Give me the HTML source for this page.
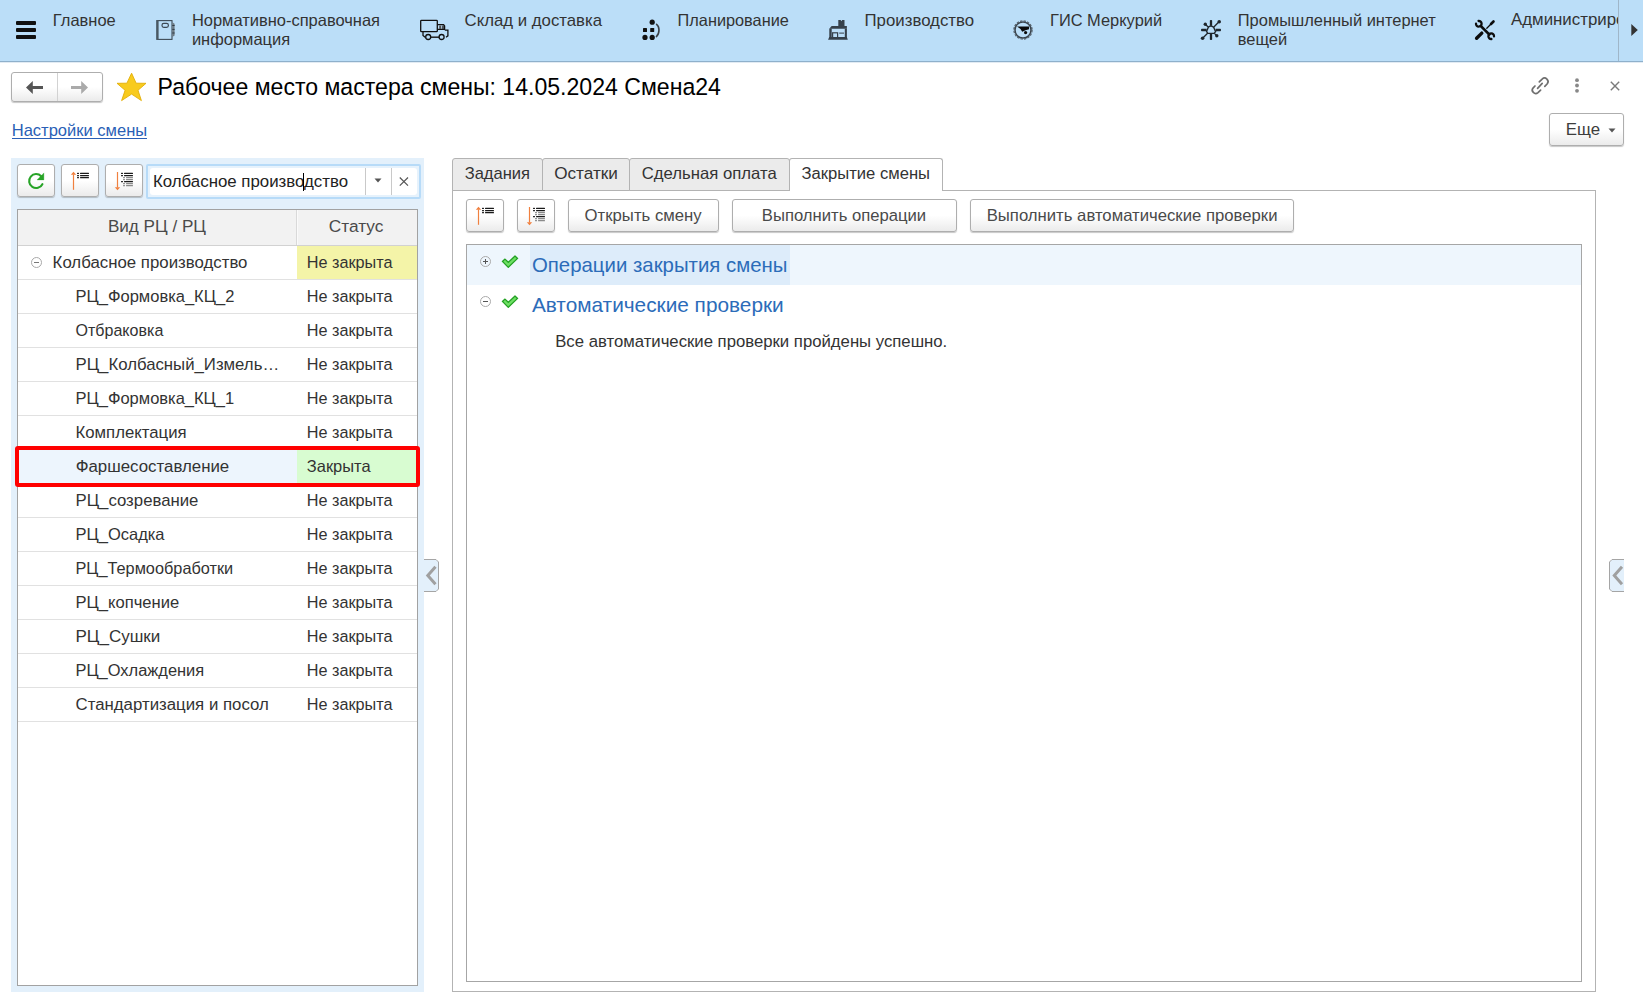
<!DOCTYPE html>
<html><head><meta charset="utf-8"><style>
html,body{margin:0;padding:0;width:1643px;height:1003px;overflow:hidden;background:#fff;position:relative}
.t{position:absolute;white-space:nowrap;line-height:30px;font-family:"Liberation Sans", sans-serif}
.b{position:absolute;box-sizing:border-box}
svg{position:absolute;overflow:visible}
.btn{position:absolute;box-sizing:border-box;border:1px solid #aeaeae;border-radius:3px;background:linear-gradient(#ffffff 0%,#ffffff 50%,#ebebeb 100%);box-shadow:0 1px 1px rgba(0,0,0,0.22)}
</style></head><body>
<div class="b" style="left:0px;top:0px;width:1643px;height:61px;background:#bbdef8"></div>
<div class="b" style="left:0px;top:61px;width:1643px;height:1px;background:#8fb0cb"></div>
<div class="b" style="left:0px;top:62px;width:1643px;height:1px;background:#e2ebf3"></div>
<div class="b" style="left:16px;top:21px;width:20px;height:4px;background:#111;border-radius:1px"></div>
<div class="b" style="left:16px;top:28px;width:20px;height:4px;background:#111;border-radius:1px"></div>
<div class="b" style="left:16px;top:35px;width:20px;height:4px;background:#111;border-radius:1px"></div>
<div class="t" style="left:52.80px;top:5.00px;font-size:16.481px;color:#333333;">Главное</div>
<div class="t" style="left:191.90px;top:5.00px;font-size:16.477px;color:#333333;">Нормативно-справочная</div>
<div class="t" style="left:464.60px;top:6.00px;font-size:16.775px;color:#333333;">Склад и доставка</div>
<div class="t" style="left:677.60px;top:5.00px;font-size:16.312px;color:#333333;">Планирование</div>
<div class="t" style="left:864.50px;top:6.00px;font-size:16.823px;color:#333333;">Производство</div>
<div class="t" style="left:1050.00px;top:5.00px;font-size:16.434px;color:#333333;">ГИС Меркурий</div>
<div class="t" style="left:1237.80px;top:5.00px;font-size:16.450px;color:#333333;">Промышленный интернет</div>
<div class="t" style="left:191.90px;top:24.00px;font-size:16.477px;color:#333333;">информация</div>
<div class="t" style="left:1237.80px;top:24.00px;font-size:16.450px;color:#333333;">вещей</div>
<div style="position:absolute;left:1500px;top:0;width:118px;height:61px;overflow:hidden"><div class="t" style="left:11.00px;top:5.00px;font-size:16.85px;color:#333">Администрирование</div></div>
<div class="b" style="left:1618px;top:0px;width:1px;height:61px;background:#9fb6c9"></div>
<svg style="left:1631px;top:24px" width="8" height="12"><path d="M0.3 0 L6.8 6 L0.3 12 Z" fill="#333"/></svg>
<svg style="left:150px;top:15px" width="30" height="30" viewBox="0 0 30 30"><rect x="7" y="5.6" width="15" height="18.8" fill="none" stroke="#3d4a55" stroke-width="1.1"/><rect x="6.4" y="5.1" width="2.2" height="19.7" fill="#4a5863"/><path d="M22.3 7.3 L24.6 8.8 V20.5 L22.3 22 Z" fill="#6d7a84"/><path d="M22.3 10.5h2.3M22.3 14.4h2.3M22.3 18h2.3" stroke="#2f3a44" stroke-width="1"/><rect x="12" y="8.4" width="6.4" height="4" rx="1.8" fill="none" stroke="#3d4a55" stroke-width="1.2"/></svg>
<svg style="left:415px;top:14px" width="40" height="30" viewBox="0 0 40 30"><rect x="5.7" y="6.3" width="16.6" height="11.4" rx="0.8" fill="none" stroke="#111" stroke-width="1.3"/><path d="M22.3 10.6 H28.6 L29.6 12 V15.4 H22.3" fill="none" stroke="#111" stroke-width="1.3"/><rect x="24.2" y="11.5" width="2" height="3.5" fill="#555"/><rect x="27.2" y="11.5" width="1.6" height="3.5" fill="#333"/><path d="M29.8 16.2 H32.9 V21.8 L31 23.2" fill="none" stroke="#111" stroke-width="1.3"/><path d="M8 17.7 V21.5 L10.5 23.5" fill="none" stroke="#111" stroke-width="1.3"/><path d="M15.8 23.2 H24.2" stroke="#222" stroke-width="1.5"/><circle cx="13.2" cy="23" r="2.5" fill="none" stroke="#111" stroke-width="1.3"/><circle cx="26.6" cy="23" r="2.5" fill="none" stroke="#111" stroke-width="1.3"/></svg>
<svg style="left:636px;top:15px" width="30" height="30" viewBox="0 0 30 30"><circle cx="16.2" cy="7.2" r="2.6" fill="#111"/><rect x="7" y="13" width="4" height="4" rx="0.6" fill="#111"/><rect x="14.2" y="13" width="4" height="4" rx="0.6" fill="#111"/><circle cx="9" cy="22.4" r="2.6" fill="#111"/><circle cx="16.2" cy="22.4" r="2.6" fill="#111"/><path d="M20.6 9.3 C23.6 11.5 24 18.5 20.4 21.6" fill="none" stroke="#3a3f44" stroke-width="1.6" stroke-linecap="round"/></svg>
<svg style="left:823px;top:15px" width="30" height="30" viewBox="0 0 30 30"><g fill="#36414b"><path d="M15.3 5.1 H17.6 L18.4 6.2 L19.2 5.1 H21.5 V12 H15.3 Z"/><path d="M6.3 13.8 L8.6 11.1 H23.9 V13.8 Z"/><rect x="6.3" y="13.6" width="2.4" height="10.4"/><rect x="21.8" y="13.6" width="2.1" height="10.4"/><path d="M5.1 24.8 L6.2 22.1 H23.8 L24.8 24.8 Z"/><rect x="16.2" y="17.6" width="4.8" height="1"/></g><rect x="9.6" y="17.8" width="5" height="5.6" fill="none" stroke="#36414b" stroke-width="1.2"/></svg>
<svg style="left:1008px;top:15px" width="30" height="30" viewBox="0 0 30 30"><circle cx="15" cy="15" r="9.1" fill="none" stroke="#55616b" stroke-width="1.2" stroke-dasharray="2.4 1.2"/><circle cx="15" cy="15" r="8" fill="none" stroke="#3a444d" stroke-width="1.5"/><path d="M9 11.4 H21 V14.3 L17.5 15.3 L14.2 16.8 L12.5 14 Z" fill="#0a0a0a"/><circle cx="17.6" cy="17.6" r="1.6" fill="#0a0a0a"/></svg>
<svg style="left:1196px;top:15px" width="30" height="30" viewBox="0 0 30 30"><g stroke="#1f262c" fill="none"><path d="M12.6 11.8 L15 10.8 L17.6 12.2 L19.6 16.6 L18 18.4 H11.6 L10.6 16.2 Z" stroke-width="1.4"/><path d="M15 5.5 V10.8 M15 18.4 V24.5 M5.5 15 H10.6 M19.6 15 H24.5" stroke-width="2.3"/><path d="M9.5 9.5 L12.2 12 M23 6.8 L17.6 12.2 M6.6 23.2 L11.6 18.2 M18.4 18.4 L20.6 20.6" stroke-width="1.3"/></g><g fill="#1f262c"><circle cx="9.3" cy="9.3" r="1.7"/><circle cx="23.2" cy="6.7" r="1.8"/><circle cx="6.6" cy="23.2" r="1.8"/><circle cx="20.8" cy="20.8" r="1.7"/><rect x="14" y="5.2" width="2" height="1.6"/><rect x="14" y="23.2" width="2" height="1.6"/><rect x="5.2" y="14" width="1.6" height="2"/><rect x="23.2" y="14" width="1.6" height="2"/></g></svg>
<svg style="left:1470px;top:15px" width="30" height="30" viewBox="0 0 30 30"><g fill="none" stroke="#0d0d0d" stroke-linecap="round"><path d="M10.8 11 L19.3 19.5" stroke-width="2.5"/><path d="M8.56 6.0 A2.8 2.8 0 1 1 6.0 8.56" stroke-width="2.3"/><path d="M21.4 24 A2.8 2.8 0 1 1 24 21.4" stroke-width="2.3"/><path d="M6.6 23.3 L11.8 18.1" stroke-width="3.4"/><path d="M16.8 13.2 L21.5 8.5" stroke-width="1.3"/><path d="M21 9 L23.5 6.5" stroke-width="2.6"/></g></svg>
<div class="btn" style="left:11px;top:72px;width:92px;height:30px"></div>
<div class="b" style="left:57px;top:73px;width:1px;height:28px;background:#d2d2d2"></div>
<svg style="left:25px;top:80px" width="19" height="15" viewBox="0 0 19 15"><path d="M1 7.5 L7.8 1 V6 H18 V9 H7.8 V14 Z" fill="#555"/></svg>
<svg style="left:70px;top:80px" width="19" height="15" viewBox="0 0 19 15"><path d="M18 7.5 L11.2 1 V6 H1 V9 H11.2 V14 Z" fill="#aaaaaa"/></svg>
<svg style="left:116px;top:72px" width="31" height="30" viewBox="0 0 31 30"><path d="M15.6 1.2 L20.1 11.2 L30 11.3 L22 18.3 L25.4 28.6 L15.6 22.1 L5.6 28.6 L9.1 18.3 L1 11.3 L10.9 11.2 Z" fill="#f8cb1e" stroke="#e2ae06" stroke-width="0.9" stroke-linejoin="round"/></svg>
<div class="t" style="left:157.60px;top:71.50px;font-size:23.095px;color:#000000;">Рабочее место мастера смены: 14.05.2024 Смена24</div>
<svg style="left:1525px;top:72px" width="30" height="28" viewBox="0 0 30 28"><g fill="none" stroke="#6f6f6f" stroke-width="1.7" stroke-linecap="round"><path d="M14.3 9.9 L17.13 7.03 A3.5 3.5 0 0 1 22.07 11.97 L19.8 14.3"/><path d="M10.0 14.0 L8.2 15.8 A3.4 3.4 0 0 0 13.0 20.6 L15.6 18.1"/><path d="M12.6 16.4 L17.2 11.4"/></g></svg>
<svg style="left:1573px;top:78px" width="8" height="15" viewBox="0 0 8 15"><circle cx="4" cy="2.2" r="1.9" fill="#888"/><circle cx="4" cy="7.5" r="1.9" fill="#888"/><circle cx="4" cy="12.8" r="1.9" fill="#888"/></svg>
<svg style="left:1609px;top:80px" width="12" height="12" viewBox="0 0 12 12"><path d="M1.8 1.8 L10.2 10.2 M10.2 1.8 L1.8 10.2" stroke="#7a7a7a" stroke-width="1.4"/></svg>
<div class="t" style="left:11.70px;top:116.00px;font-size:16.546px;color:#2a5fb6;">Настройки смены</div>
<div class="b" style="left:12px;top:138px;width:135px;height:1px;background:#2a5fb6"></div>
<div class="btn" style="left:1549px;top:113px;width:75px;height:33px"></div>
<div class="t" style="left:1565.80px;top:114.70px;font-size:16.878px;color:#3d3d3d;">Еще</div>
<svg style="left:1608px;top:128px" width="8" height="5" viewBox="0 0 8 5"><path d="M0.5 0.5 H7.5 L4 4.5 Z" fill="#555"/></svg>
<div class="b" style="left:11px;top:158px;width:413px;height:834px;background:#e3f0fb"></div>
<div class="btn" style="left:17px;top:164px;width:38px;height:33px"></div>
<div class="btn" style="left:61px;top:164px;width:38px;height:33px"></div>
<div class="btn" style="left:105px;top:164px;width:38px;height:33px"></div>
<svg style="left:22px;top:167px" width="28" height="28" viewBox="0 0 28 28"><path d="M19.2 9.2 A7 7 0 1 0 20.4 17.2" fill="none" stroke="#28a428" stroke-width="2.1" stroke-linecap="round"/><path d="M21.9 5.9 L21.9 12.9 L15 12.9 Z" fill="#28a428" stroke="#28a428" stroke-width="0.3" stroke-linejoin="round"/></svg>
<svg style="left:64px;top:166px" width="30" height="28" viewBox="0 0 30 28"><path d="M9.5 8.4 V23.8" stroke="#f0803f" stroke-width="1.2"/><path d="M9.5 5.8 L12.2 8.8 H6.8 Z" fill="#f0803f"/><rect x="13" y="6.800000000000001" width="2" height="1.3" rx="0.5" fill="#1a1a1a"/><rect x="16" y="6.800000000000001" width="9" height="1.3" rx="0.5" fill="#1a1a1a"/><rect x="13" y="8.9" width="2" height="1.3" rx="0.5" fill="#1a1a1a"/><rect x="16" y="8.9" width="9" height="1.3" rx="0.5" fill="#1a1a1a"/><rect x="13" y="10.9" width="2" height="1.3" rx="0.5" fill="#1a1a1a"/><rect x="16" y="10.9" width="9" height="1.3" rx="0.5" fill="#1a1a1a"/></svg>
<svg style="left:108px;top:166px" width="30" height="28" viewBox="0 0 30 28"><path d="M9.5 6 V21.5" stroke="#f0803f" stroke-width="1.2"/><path d="M9.5 24.2 L12.2 21.2 H6.8 Z" fill="#f0803f"/><rect x="13" y="6.800000000000001" width="2" height="1.3" rx="0.5" fill="#1a1a1a"/><rect x="16" y="6.800000000000001" width="9" height="1.3" rx="0.5" fill="#1a1a1a"/><rect x="13" y="8.9" width="2" height="1.3" rx="0.5" fill="#1a1a1a"/><rect x="16" y="8.9" width="9" height="1.3" rx="0.5" fill="#1a1a1a"/><rect x="15" y="10.9" width="2" height="1.3" rx="0.5" fill="#8a8a8a"/><rect x="18" y="10.9" width="7" height="1.3" rx="0.5" fill="#8a8a8a"/><rect x="15" y="12.9" width="2" height="1.3" rx="0.5" fill="#8a8a8a"/><rect x="18" y="12.9" width="7" height="1.3" rx="0.5" fill="#8a8a8a"/><rect x="13" y="14.9" width="2" height="1.3" rx="0.5" fill="#1a1a1a"/><rect x="16" y="14.9" width="9" height="1.3" rx="0.5" fill="#1a1a1a"/><rect x="15" y="16.9" width="2" height="1.3" rx="0.5" fill="#8a8a8a"/><rect x="18" y="16.9" width="7" height="1.3" rx="0.5" fill="#8a8a8a"/><rect x="15" y="18.9" width="2" height="1.3" rx="0.5" fill="#8a8a8a"/><rect x="18" y="18.9" width="7" height="1.3" rx="0.5" fill="#8a8a8a"/></svg>
<div class="b" style="left:146px;top:164px;width:275px;height:35px;border:2px solid #b7dbf8;border-radius:2px;background:#e6f2fc"></div>
<div class="b" style="left:150px;top:168px;width:267px;height:27px;background:#fff;border-radius:3px"></div>
<div class="t" style="left:153.00px;top:166.80px;font-size:16.843px;color:#222222;">Колбасное производство</div>
<div class="b" style="left:303px;top:173px;width:1px;height:18px;background:#000"></div>
<div class="b" style="left:365px;top:168px;width:1px;height:27px;background:#c9c9c9"></div>
<div class="b" style="left:391px;top:168px;width:1px;height:27px;background:#c9c9c9"></div>
<svg style="left:374px;top:178px" width="8" height="5" viewBox="0 0 8 5"><path d="M0.5 0.5 H7.5 L4 4.5 Z" fill="#555"/></svg>
<svg style="left:398px;top:176px" width="12" height="12" viewBox="0 0 12 12"><path d="M1.8 1.5 L10 9.7 M10 1.5 L1.8 9.7" stroke="#555" stroke-width="1.2"/></svg>
<div class="b" style="left:17px;top:209px;width:401px;height:777px;border:1px solid #a2a2a2;background:#fff"></div>
<div class="b" style="left:18px;top:210px;width:399px;height:35px;background:#f2f2f2"></div>
<div class="b" style="left:18px;top:245px;width:399px;height:1px;background:#d2d2d2"></div>
<div class="b" style="left:296px;top:210px;width:1px;height:35px;background:#d9d9d9"></div>
<div class="b" style="left:297px;top:210px;width:1px;height:35px;background:#fafafa"></div>
<div class="t" style="left:107.90px;top:211.80px;font-size:17.126px;color:#4a4a4a;">Вид РЦ / РЦ</div>
<div class="t" style="left:328.70px;top:210.80px;font-size:17.306px;color:#4a4a4a;">Статус</div>
<div class="b" style="left:297px;top:246px;width:120px;height:33px;background:#f4f4a8"></div>
<div class="b" style="left:18px;top:450px;width:399px;height:33px;background:#edf5fd"></div>
<div class="b" style="left:297px;top:450px;width:120px;height:33px;background:#d8fcd1"></div>
<div class="b" style="left:18px;top:279px;width:399px;height:1px;background:#e1e1e1"></div>
<div class="b" style="left:18px;top:313px;width:399px;height:1px;background:#e1e1e1"></div>
<div class="b" style="left:18px;top:347px;width:399px;height:1px;background:#e1e1e1"></div>
<div class="b" style="left:18px;top:381px;width:399px;height:1px;background:#e1e1e1"></div>
<div class="b" style="left:18px;top:415px;width:399px;height:1px;background:#e1e1e1"></div>
<div class="b" style="left:18px;top:449px;width:399px;height:1px;background:#e1e1e1"></div>
<div class="b" style="left:18px;top:483px;width:399px;height:1px;background:#e1e1e1"></div>
<div class="b" style="left:18px;top:517px;width:399px;height:1px;background:#e1e1e1"></div>
<div class="b" style="left:18px;top:551px;width:399px;height:1px;background:#e1e1e1"></div>
<div class="b" style="left:18px;top:585px;width:399px;height:1px;background:#e1e1e1"></div>
<div class="b" style="left:18px;top:619px;width:399px;height:1px;background:#e1e1e1"></div>
<div class="b" style="left:18px;top:653px;width:399px;height:1px;background:#e1e1e1"></div>
<div class="b" style="left:18px;top:687px;width:399px;height:1px;background:#e1e1e1"></div>
<div class="b" style="left:18px;top:721px;width:399px;height:1px;background:#e1e1e1"></div>
<svg style="left:30px;top:256px" width="13" height="13" viewBox="0 0 13 13"><circle cx="6.5" cy="6.5" r="5" fill="#fff" stroke="#a9a9a9" stroke-width="1"/><path d="M4 6.5 H9" stroke="#777" stroke-width="1"/></svg>
<div class="t" style="left:52.60px;top:248.00px;font-size:16.826px;color:#333333;">Колбасное производство</div>
<div class="t" style="left:75.50px;top:282.00px;font-size:16.537px;color:#333333;">РЦ_Формовка_КЦ_2</div>
<div class="t" style="left:75.50px;top:315.00px;font-size:16.055px;color:#333333;">Отбраковка</div>
<div class="t" style="left:75.50px;top:350.00px;font-size:16.787px;color:#333333;">РЦ_Колбасный_Измель…</div>
<div class="t" style="left:75.50px;top:383.00px;font-size:16.516px;color:#333333;">РЦ_Формовка_КЦ_1</div>
<div class="t" style="left:75.50px;top:418.00px;font-size:16.769px;color:#333333;">Комплектация</div>
<div class="t" style="left:75.70px;top:452.00px;font-size:16.856px;color:#333333;">Фаршесоставление</div>
<div class="t" style="left:75.50px;top:486.00px;font-size:16.773px;color:#333333;">РЦ_созревание</div>
<div class="t" style="left:75.50px;top:519.00px;font-size:16.504px;color:#333333;">РЦ_Осадка</div>
<div class="t" style="left:75.50px;top:553.00px;font-size:16.314px;color:#333333;">РЦ_Термообработки</div>
<div class="t" style="left:75.50px;top:588.00px;font-size:16.582px;color:#333333;">РЦ_копчение</div>
<div class="t" style="left:75.50px;top:622.00px;font-size:17.026px;color:#333333;">РЦ_Сушки</div>
<div class="t" style="left:75.50px;top:655.00px;font-size:16.442px;color:#333333;">РЦ_Охлаждения</div>
<div class="t" style="left:75.50px;top:690.00px;font-size:16.826px;color:#333333;">Стандартизация и посол</div>
<div class="t" style="left:306.80px;top:247.00px;font-size:16.229px;color:#333333;">Не закрыта</div>
<div class="t" style="left:306.80px;top:281.00px;font-size:16.229px;color:#333333;">Не закрыта</div>
<div class="t" style="left:306.80px;top:315.00px;font-size:16.229px;color:#333333;">Не закрыта</div>
<div class="t" style="left:306.80px;top:349.00px;font-size:16.229px;color:#333333;">Не закрыта</div>
<div class="t" style="left:306.80px;top:383.00px;font-size:16.229px;color:#333333;">Не закрыта</div>
<div class="t" style="left:306.80px;top:417.00px;font-size:16.229px;color:#333333;">Не закрыта</div>
<div class="t" style="left:306.80px;top:451.00px;font-size:16.473px;color:#333333;">Закрыта</div>
<div class="t" style="left:306.80px;top:485.00px;font-size:16.229px;color:#333333;">Не закрыта</div>
<div class="t" style="left:306.80px;top:519.00px;font-size:16.229px;color:#333333;">Не закрыта</div>
<div class="t" style="left:306.80px;top:553.00px;font-size:16.229px;color:#333333;">Не закрыта</div>
<div class="t" style="left:306.80px;top:587.00px;font-size:16.229px;color:#333333;">Не закрыта</div>
<div class="t" style="left:306.80px;top:621.00px;font-size:16.229px;color:#333333;">Не закрыта</div>
<div class="t" style="left:306.80px;top:655.00px;font-size:16.229px;color:#333333;">Не закрыта</div>
<div class="t" style="left:306.80px;top:689.00px;font-size:16.229px;color:#333333;">Не закрыта</div>
<div class="b" style="left:15px;top:446px;width:405px;height:41px;border:4px solid #ff0000;border-radius:3px"></div>
<svg style="left:423px;top:558px" width="17" height="35" viewBox="0 0 17 35"><path d="M1 1.5 H13 L15.5 4 V31 L13 33.5 H1" fill="#e3f0fb" stroke="#a5a5a5" stroke-width="1"/><path d="M12.5 8.8 L4.8 17.5 L12.5 26.2" fill="none" stroke="#a0a0a0" stroke-width="3"/></svg>
<div class="b" style="left:452px;top:190px;width:1144px;height:802px;border:1px solid #b3b3b3;background:#fff"></div>
<div class="b" style="left:452px;top:158px;width:91px;height:33px;border:1px solid #b3b3b3;border-radius:3px 3px 0 0;background:#ebebeb"></div>
<div class="b" style="left:542px;top:158px;width:88px;height:33px;border:1px solid #b3b3b3;border-radius:3px 3px 0 0;background:#ebebeb"></div>
<div class="b" style="left:629px;top:158px;width:161px;height:33px;border:1px solid #b3b3b3;border-radius:3px 3px 0 0;background:#ebebeb"></div>
<div class="b" style="left:789px;top:158px;width:154px;height:33px;border:1px solid #b3b3b3;border-bottom:none;border-radius:3px 3px 0 0;background:#fff"></div>
<div class="t" style="left:464.70px;top:159.10px;font-size:16.552px;color:#333333;">Задания</div>
<div class="t" style="left:554.20px;top:158.10px;font-size:17.161px;color:#333333;">Остатки</div>
<div class="t" style="left:641.80px;top:159.10px;font-size:16.713px;color:#333333;">Сдельная оплата</div>
<div class="t" style="left:801.50px;top:159.10px;font-size:16.616px;color:#333333;">Закрытие смены</div>
<div class="btn" style="left:466px;top:199px;width:38px;height:33px"></div>
<div class="btn" style="left:517px;top:199px;width:38px;height:33px"></div>
<div class="btn" style="left:568px;top:199px;width:151px;height:33px"></div>
<div class="btn" style="left:732px;top:199px;width:225px;height:33px"></div>
<div class="btn" style="left:970px;top:199px;width:324px;height:33px"></div>
<svg style="left:469px;top:201px" width="30" height="28" viewBox="0 0 30 28"><path d="M9.5 8.4 V23.8" stroke="#f0803f" stroke-width="1.2"/><path d="M9.5 5.8 L12.2 8.8 H6.8 Z" fill="#f0803f"/><rect x="13" y="6.800000000000001" width="2" height="1.3" rx="0.5" fill="#1a1a1a"/><rect x="16" y="6.800000000000001" width="9" height="1.3" rx="0.5" fill="#1a1a1a"/><rect x="13" y="8.9" width="2" height="1.3" rx="0.5" fill="#1a1a1a"/><rect x="16" y="8.9" width="9" height="1.3" rx="0.5" fill="#1a1a1a"/><rect x="13" y="10.9" width="2" height="1.3" rx="0.5" fill="#1a1a1a"/><rect x="16" y="10.9" width="9" height="1.3" rx="0.5" fill="#1a1a1a"/></svg>
<svg style="left:520px;top:201px" width="30" height="28" viewBox="0 0 30 28"><path d="M9.5 6 V21.5" stroke="#f0803f" stroke-width="1.2"/><path d="M9.5 24.2 L12.2 21.2 H6.8 Z" fill="#f0803f"/><rect x="13" y="6.800000000000001" width="2" height="1.3" rx="0.5" fill="#1a1a1a"/><rect x="16" y="6.800000000000001" width="9" height="1.3" rx="0.5" fill="#1a1a1a"/><rect x="13" y="8.9" width="2" height="1.3" rx="0.5" fill="#1a1a1a"/><rect x="16" y="8.9" width="9" height="1.3" rx="0.5" fill="#1a1a1a"/><rect x="15" y="10.9" width="2" height="1.3" rx="0.5" fill="#8a8a8a"/><rect x="18" y="10.9" width="7" height="1.3" rx="0.5" fill="#8a8a8a"/><rect x="15" y="12.9" width="2" height="1.3" rx="0.5" fill="#8a8a8a"/><rect x="18" y="12.9" width="7" height="1.3" rx="0.5" fill="#8a8a8a"/><rect x="13" y="14.9" width="2" height="1.3" rx="0.5" fill="#1a1a1a"/><rect x="16" y="14.9" width="9" height="1.3" rx="0.5" fill="#1a1a1a"/><rect x="15" y="16.9" width="2" height="1.3" rx="0.5" fill="#8a8a8a"/><rect x="18" y="16.9" width="7" height="1.3" rx="0.5" fill="#8a8a8a"/><rect x="15" y="18.9" width="2" height="1.3" rx="0.5" fill="#8a8a8a"/><rect x="18" y="18.9" width="7" height="1.3" rx="0.5" fill="#8a8a8a"/></svg>
<div class="t" style="left:584.60px;top:200.60px;font-size:16.736px;color:#4a4a4a;">Открыть смену</div>
<div class="t" style="left:761.80px;top:200.60px;font-size:16.667px;color:#4a4a4a;">Выполнить операции</div>
<div class="t" style="left:986.70px;top:200.60px;font-size:16.710px;color:#4a4a4a;">Выполнить автоматические проверки</div>
<div class="b" style="left:466px;top:244px;width:1116px;height:738px;border:1px solid #a6a6a6;background:#fff"></div>
<div class="b" style="left:467px;top:245px;width:1114px;height:40px;background:#eef6fd"></div>
<div class="b" style="left:530px;top:245px;width:260px;height:40px;background:#ddecfa"></div>
<svg style="left:479px;top:255px" width="13" height="13" viewBox="0 0 13 13"><circle cx="6.5" cy="6.5" r="5" fill="none" stroke="#aaaaaa" stroke-width="1"/><path d="M4 6.5 H9" stroke="#555" stroke-width="1"/><path d="M6.5 4 V9" stroke="#555" stroke-width="1"/></svg>
<svg style="left:501px;top:255px" width="18" height="14" viewBox="0 0 18 14"><path d="M1.4 6.4 L4 4.1 L7.3 7.3 L14 1 L16.6 3.4 L7.3 12.4 Z" fill="#6ddf63" stroke="#23a023" stroke-width="1.3" stroke-linejoin="round"/></svg>
<svg style="left:479px;top:295px" width="13" height="13" viewBox="0 0 13 13"><circle cx="6.5" cy="6.5" r="5" fill="none" stroke="#aaaaaa" stroke-width="1"/><path d="M4 6.5 H9" stroke="#555" stroke-width="1"/></svg>
<svg style="left:501px;top:295px" width="18" height="14" viewBox="0 0 18 14"><path d="M1.4 6.4 L4 4.1 L7.3 7.3 L14 1 L16.6 3.4 L7.3 12.4 Z" fill="#6ddf63" stroke="#23a023" stroke-width="1.3" stroke-linejoin="round"/></svg>
<div class="t" style="left:531.90px;top:249.70px;font-size:20.403px;color:#2c6cb9;">Операции закрытия смены</div>
<div class="t" style="left:531.90px;top:290.00px;font-size:20.813px;color:#2c6cb9;">Автоматические проверки</div>
<div class="t" style="left:555.20px;top:327.00px;font-size:16.721px;color:#333333;">Все автоматические проверки пройдены успешно.</div>
<svg style="left:1608px;top:558px" width="17" height="35" viewBox="0 0 17 35"><path d="M16 1.5 H4 L1.5 4 V31 L4 33.5 H16" fill="#e3f0fb" stroke="#a5a5a5" stroke-width="1"/><path d="M14 8.8 L6.3 17.5 L14 26.2" fill="none" stroke="#a0a0a0" stroke-width="3"/></svg>
</body></html>
